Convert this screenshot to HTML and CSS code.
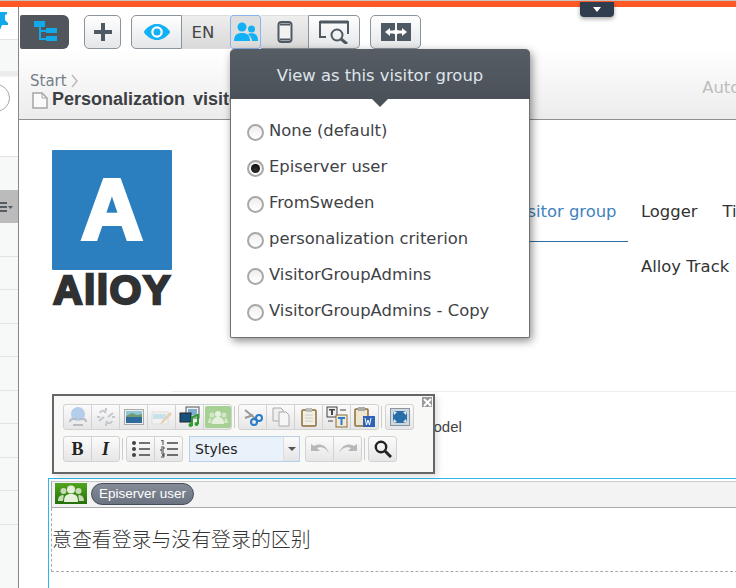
FILE: index.html
```html
<!DOCTYPE html>
<html lang="en">
<head>
<meta charset="utf-8">
<title>Personalization visitor group</title>
<link rel="stylesheet" href="styles.css">
</head>
<body>
<div class="app">
  <div class="stripe"></div>
  <div class="shell">
    <aside class="sidebar">
      <div class="side-row side-pin">
        <svg width="8" height="20" viewBox="0 0 8 20"><path d="M-6 1h13v2l-2 1v5l3 3v2H2l-2 5-1-5h-6z" fill="#12a9ea"/></svg>
      </div>
      <div class="side-row side-h30"></div>
      <div class="side-search"><span class="side-circle"></span></div>
      <div class="side-row side-h33a"></div>
      <div class="side-row side-active">
        <svg width="18" height="12" viewBox="0 0 18 12"><path d="M0 1h7v2H0zM0 5h7v2H0zM0 9h7v2H0z" fill="#555b63"/><path d="M8 5h5l-2.500 3z" fill="#555b63"/></svg>
      </div>
      <div class="side-row side-h33"></div>
      <div class="side-row side-h33"></div>
      <div class="side-row side-h33"></div>
      <div class="side-row side-h33"></div>
      <div class="side-row side-h33"></div>
      <div class="side-row side-h33"></div>
      <div class="side-row side-h33"></div>
      <div class="side-row side-h33"></div>
      <div class="side-row side-h33"></div>
    </aside>
    <main class="main">
      <div class="toolbar">
        <button class="tree-btn">
          <svg width="24" height="22" viewBox="0 0 24 22"><path d="M1 0h11v6H1zM6 6h2v13H6z" fill="#12a9ea"/><path d="M7 9h6v2H7zM7 17h6v2H7z" fill="#12a9ea"/><path d="M13 7h11v5H13zM13 15h11v5H13z" fill="#12a9ea"/></svg>
        </button>
        <button class="btn btn-add">
          <svg width="20" height="20" viewBox="0 0 20 20"><path d="M8 1h4v7h7v4h-7v7H8v-7H1V8h7z" fill="#4f5963"/></svg>
        </button>
        <div class="btn-group">
          <button class="seg seg-eye">
            <svg width="28" height="16" viewBox="0 0 30 18"><path d="M0 9C5 2 10 0 15 0s10 2 15 9c-5 7-10 9-15 9S5 16 0 9z" fill="#12b0f5"/><circle cx="15" cy="9" r="6.500" fill="#fff"/><circle cx="15" cy="9" r="4" fill="#12b0f5"/></svg>
          </button>
          <button class="seg seg-lang">EN</button>
          <button class="seg seg-people">
            <svg width="24" height="20" viewBox="0 0 24 20"><circle cx="8" cy="5" r="4.500" fill="#12b0f5"/><path d="M0 19c0-6 3-8 8-8s8 2 8 8z" fill="#12b0f5"/><circle cx="17.500" cy="7" r="3.500" fill="#12b0f5"/><path d="M14 12c1-1 6-1 7 0 2 1 3 3 3 7h-6c0-3-2-5-4-7z" fill="#12b0f5"/></svg>
          </button>
          <button class="seg seg-mobile">
            <svg width="16" height="22" viewBox="0 0 16 22"><rect x="1.500" y="1" width="13" height="20" rx="3" fill="#f2f2f2" stroke="#4f5963" stroke-width="2"/><path d="M3 3.500h10M3 18.500h10" stroke="#4f5963" stroke-width="2"/></svg>
          </button>
          <button class="seg seg-preview">
            <svg width="30" height="24" viewBox="0 0 30 24"><path d="M7 17H1V2h28v12" fill="none" stroke="#4f5963" stroke-width="2"/><path d="M1 2h28" stroke="#4f5963" stroke-width="3"/><circle cx="18" cy="15" r="5.500" fill="none" stroke="#4f5963" stroke-width="2"/><path d="M22 19l6 5" stroke="#4f5963" stroke-width="3"/></svg>
          </button>
        </div>
        <button class="btn btn-compare">
          <svg width="30" height="18" viewBox="0 0 30 18"><path d="M0 0h14v18H0zM16 0h14v18H16z" fill="#4f5963"/><path d="M11 9l5-4v2.500h-2v3h2V13zM19 9l-5-4v8z" fill="#fff"/><path d="M4 9l5-4v2.500h6v3H9V13zM26 9l-5-4v2.500h-6v3h6V13z" fill="#fff"/></svg>
        </button>
      </div>
      <header class="page-head">
        <div class="head-text">
          <div class="crumb">Start <svg class="crumb-arrow" width="8" height="14" viewBox="0 0 8 14"><path d="M1 1l5 6-5 6" fill="none" stroke="#bbb" stroke-width="1.500"/></svg></div>
          <div class="title-row">
            <svg class="page-icon" width="16" height="17" viewBox="0 0 16 17"><path d="M1 1h9l5 5v10H1z" fill="#fafafa" stroke="#a5a5a5" stroke-width="1.500"/><path d="M10 1v5h5" fill="none" stroke="#a5a5a5"/></svg>
            <h1 class="title">Personalization visitor group</h1>
          </div>
        </div>
        <div class="autosave">Autosaved</div>
      </header>
      <section class="content">
        <div class="hero">
          <div class="logo">
            <div class="logo-mark">A</div>
            <div class="logo-word">AllOY</div>
          </div>
          <nav class="nav">
            <a class="tab-active">Visitor group</a>
            <div class="nav-rest">
              <div class="nav-line"><a>Logger</a><a>Timer</a></div>
              <div class="nav-line"><a>Alloy Track</a></div>
            </div>
          </nav>
        </div>
        <div class="model-row">
          <p class="model-text">Model</p>
        </div>
        <div class="editor">
          <div class="editor-head">
            <span class="vg-icon">
              <svg width="26" height="17" viewBox="0 0 26 17"><circle cx="13" cy="4.500" r="4" fill="#e6f1dc"/><path d="M6 17c0-6 2-8 7-8s7 2 7 8z" fill="#e6f1dc"/><circle cx="5.500" cy="6" r="3" fill="#c5dcb5"/><path d="M0 16c0-4 2-6 5.500-6 .5 2-.5 4-.5 6zM26 16c0-4-2-6-5.500-6-.5 2 .5 4 .5 6z" fill="#c5dcb5"/><circle cx="20.500" cy="6" r="3" fill="#c5dcb5"/></svg>
            </span>
            <span class="vg-pill">Episerver user</span>
          </div>
          <div class="editor-body">意查看登录与没有登录的区别</div>
        </div>
      </section>
    </main>
  </div>

  <div class="pull-tab"><span class="pull-arrow"></span></div>

  <div class="popup">
    <div class="popup-head">View as this visitor group<span class="popup-caret"></span></div>
    <ul class="popup-list">
      <li><span class="radio"></span>None (default)</li>
      <li><span class="radio radio-on"></span>Episerver user</li>
      <li><span class="radio"></span>FromSweden</li>
      <li><span class="radio"></span>personalization criterion</li>
      <li><span class="radio"></span>VisitorGroupAdmins</li>
      <li><span class="radio"></span>VisitorGroupAdmins - Copy</li>
    </ul>
  </div>

  <div class="rte">
    <span class="rte-close">
      <svg width="9" height="9" viewBox="0 0 9 9"><path d="M1 1l7 7M8 1L1 8" stroke="#fff" stroke-width="2"/></svg>
    </span>
    <div class="rte-row">
      <div class="tb-group">
        <span class="tb"><svg width="22" height="22" viewBox="0 0 22 22"><circle cx="11" cy="8" r="7" fill="#b4cdea"/><path d="M3 16a3 3 0 0 1 3-3h4M19 16a3 3 0 0 0-3-3h-4M6 19h10" fill="none" stroke="#b9bdc2" stroke-width="2"/></svg></span>
        <span class="tb"><svg width="20" height="20" viewBox="0 0 20 20"><path d="M4 6a3 3 0 0 1 4-2l2 2M16 14a3 3 0 0 1-4 2l-2-2M3 14l5-4M17 6l-5 4M10 1v3M10 16v3M1 10h3M16 10h3" fill="none" stroke="#c4c7cb" stroke-width="2"/></svg></span>
        <span class="tb"><svg width="20" height="16" viewBox="0 0 20 16"><rect x=".5" y=".5" width="19" height="15" fill="#eee" stroke="#aaa"/><rect x="2" y="2" width="16" height="5" fill="#8fc6d8"/><path d="M2 7l6-3 5 2 5-1v3H2z" fill="#6e9a74"/><rect x="2" y="8" width="16" height="6" fill="#2f6b9b"/></svg></span>
        <span class="tb"><svg width="22" height="18" viewBox="0 0 22 18"><rect x="1" y="4" width="16" height="12" fill="#f2f2f2" stroke="#ddd"/><rect x="2" y="6" width="13" height="5" fill="#c6e3ec"/><path d="M10 14l9-10 2 2-9 9-3 1z" fill="#e8cfb0"/></svg></span>
        <span class="tb"><svg width="22" height="22" viewBox="0 0 22 22"><rect x="7" y="1" width="13" height="11" fill="#eef3f6" stroke="#555"/><rect x="9" y="3" width="9" height="6" fill="#7faed0"/><rect x="1" y="7" width="11" height="9" fill="#16527f" stroke="#222"/><path d="M13 20V11l6-2v9" fill="none" stroke="#2d9e31" stroke-width="2"/><circle cx="11.500" cy="19" r="2" fill="#2d9e31"/><circle cx="17.500" cy="18" r="2" fill="#2d9e31"/></svg></span>
        <span class="tb"><span class="tb-green"><svg width="20" height="14" viewBox="0 0 20 14"><circle cx="10" cy="4" r="3" fill="#e4f0dc"/><path d="M4 14c0-5 2-7 6-7s6 2 6 7z" fill="#e4f0dc"/><circle cx="4" cy="5" r="2.500" fill="#d4e6c8"/><circle cx="16" cy="5" r="2.500" fill="#d4e6c8"/><path d="M0 13c0-3 1-5 3-5l1 5zM20 13c0-3-1-5-3-5l-1 5z" fill="#d4e6c8"/></svg></span></span>
      </div>
      <span class="tb-sep"></span>
      <div class="tb-group">
        <span class="tb"><svg width="20" height="20" viewBox="0 0 20 20"><path d="M2 3l11 9M2 11l8-3" stroke="#999" stroke-width="2"/><circle cx="11" cy="15" r="3" fill="none" stroke="#2a7cc9" stroke-width="2"/><circle cx="16" cy="11" r="3" fill="none" stroke="#2a7cc9" stroke-width="2"/></svg></span>
        <span class="tb"><svg width="18" height="20" viewBox="0 0 18 20"><path d="M1 1h8l2 2v11H1z" fill="#eee" stroke="#aaa"/><path d="M7 5h7l3 3v11H7z" fill="#f6f6f6" stroke="#aaa"/></svg></span>
        <span class="tb"><svg width="16" height="20" viewBox="0 0 16 20"><rect x="1" y="3" width="14" height="16" rx="1" fill="#f3efe2" stroke="#8a6d3a" stroke-width="1.500"/><rect x="5" y="1" width="6" height="4" fill="#bbb"/><path d="M4 8h8M4 11h8M4 14h8" stroke="#ccc"/></svg></span>
        <span class="tb"><svg width="22" height="22" viewBox="0 0 22 22"><rect x="1" y="1" width="10" height="10" fill="#eee" stroke="#444"/><path d="M3 3h6v1.500H7V9H5V4.500H3z" fill="#444"/><rect x="10" y="9" width="11" height="12" fill="#f3ead6" stroke="#8a6d3a"/><path d="M12 11h7v2h-2.500v6h-2v-6H12z" fill="#2a7cc9"/><path d="M14 4h6M2 15h5" stroke="#444"/></svg></span>
        <span class="tb"><svg width="22" height="22" viewBox="0 0 22 22"><rect x="1" y="3" width="13" height="17" rx="1" fill="#efe6cf" stroke="#8a6d3a" stroke-width="1.500"/><rect x="4" y="1" width="7" height="4" fill="#aaa"/><rect x="9" y="10" width="12" height="11" fill="#2d62b5"/><path d="M11 12l1.500 7 1.500-5 1.500 5 1.500-7" fill="none" stroke="#fff"/></svg></span>
      </div>
      <span class="tb-sep"></span>
      <div class="tb-group">
        <span class="tb"><svg width="20" height="18" viewBox="0 0 20 18"><rect x=".5" y=".5" width="19" height="17" fill="#cfd8df" stroke="#8a97a3"/><rect x="3" y="3" width="14" height="12" fill="#2a6ea8"/><path d="M3 3l4 1-3 3zM17 3l-4 1 3 3zM3 15l4-1-3-3zM17 15l-4-1 3-3z" fill="#e8eef3"/></svg></span>
      </div>
    </div>
    <div class="rte-row">
      <div class="tb-group">
        <span class="tb tb-bold">B</span>
        <span class="tb tb-italic">I</span>
      </div>
      <span class="tb-sep"></span>
      <div class="tb-group">
        <span class="tb"><svg width="18" height="16" viewBox="0 0 18 16"><circle cx="2" cy="2" r="2" fill="#444"/><circle cx="2" cy="8" r="2" fill="#444"/><circle cx="2" cy="14" r="2" fill="#444"/><path d="M7 2h11M7 8h11M7 14h11" stroke="#444" stroke-width="1.500"/></svg></span>
        <span class="tb"><svg width="18" height="18" viewBox="0 0 18 18"><path d="M1 1l2-1v5M1 7h3v2H1v2h3M1 13h3v2H2h2v2H1" fill="none" stroke="#444"/><path d="M7 3h11M7 9h11M7 15h11" stroke="#444" stroke-width="1.500"/></svg></span>
      </div>
      <div class="rte-select">
        <span class="rte-select-label">Styles</span>
        <span class="rte-select-arrow"></span>
      </div>
      <div class="tb-group">
        <span class="tb"><svg width="20" height="12" viewBox="0 0 20 12"><path d="M19 11C17 6 12 3 7 5l3 3H1V1l3 2C11-1 17 3 19 11z" fill="#b7b7b7"/></svg></span>
        <span class="tb"><svg width="20" height="12" viewBox="0 0 20 12"><path d="M1 11C3 6 8 3 13 5l-3 3h9V1l-3 2C9-1 3 3 1 11z" fill="#b7b7b7"/></svg></span>
      </div>
      <span class="tb-sep"></span>
      <div class="tb-group">
        <span class="tb"><svg width="18" height="18" viewBox="0 0 18 18"><circle cx="7" cy="7" r="5.200" fill="none" stroke="#222" stroke-width="2.400"/><path d="M11 11l6 6" stroke="#222" stroke-width="3"/></svg></span>
      </div>
    </div>
  </div>
</div>
</body>
</html>
```

FILE: styles.css
```css
* { box-sizing: border-box; }
html, body { margin: 0; padding: 0; }
body { width: 736px; height: 588px; overflow: hidden; background: #fff; font-family: "DejaVu Sans", sans-serif; color: #333; }
.app { position: relative; width: 736px; height: 588px; overflow: hidden; display: flex; flex-direction: column; }
.stripe { height: 7px; flex: none; background: #ff5a26; border-top: 1px solid #c9c4c0; }
.shell { flex: 1; display: flex; min-height: 0; }

.sidebar { width: 19px; flex: none; background: #f7f9f9; border-right: 1px solid #888; display: flex; flex-direction: column; overflow: hidden; }
.side-row { flex: none; border-bottom: 1px solid #e2e4e4; display: flex; align-items: center; }
.side-pin { height: 33px; background: #fff; padding-bottom: 4px; }
.side-h30 { height: 31px; border-bottom: 0; }
.side-search { flex: none; height: 86px; background: linear-gradient(#ececec 0, #ececec 5px, #fff 6px); padding: 13px 0 0; border-bottom: 1px solid #e2e4e4; position: relative; }
.side-circle { display: block; width: 28px; height: 28px; margin-left: -18px; border: 1px solid #aaa; border-radius: 50%; background: #fff; }
.side-h33a { height: 33px; border-bottom: 0; }
.side-h33 { height: 33.500px; }
.side-active { height: 33px; background: #bbb; border-bottom: 0; justify-content: flex-start; }

.main { flex: 1; min-width: 0; display: flex; flex-direction: column; }
.toolbar { height: 42px; flex: none; display: flex; align-items: flex-end; padding-left: 1px; background: #fff; }
.toolbar button { font: inherit; padding: 0; margin: 0; display: flex; align-items: center; justify-content: center; cursor: pointer; }
.tree-btn { width: 49px; height: 34px; background: #50565c; border: 0; border-radius: 2px 6px 6px 2px; }
.btn { height: 34px; border: 1px solid #8b949c; border-radius: 5px; background: linear-gradient(#fff, #e4e6e8); }
.btn-add { width: 37px; margin-left: 15px !important; }
.btn-group { display: flex; height: 34px; margin-left: 10px; }
.seg { height: 34px; border: 1px solid #8b949c; border-left: 0; background: linear-gradient(#fff, #e4e6e8); }
.seg-eye { width: 51px; border-left: 1px solid #8b949c; border-radius: 5px 0 0 5px; }
.seg-lang { width: 48px; padding-right: 6px !important; border-top-color: #ddd; border-bottom-color: #ddd; border-right: 0; background: linear-gradient(#eee, #d9d9d9); font-size: 16.500px !important; color: #444; }
.seg-people { width: 31px; border: 1px solid #8ab4ec; border-radius: 3px; background: #dedede; }
.seg-mobile { width: 48px; background: linear-gradient(#eee, #d9d9d9); border-right: 1px solid #8b949c; border-top-color: #ddd; }
.seg-preview { width: 51px; border-radius: 0 5px 5px 0; }
.btn-compare { width: 51px; margin-left: 10px !important; }

.page-head { height: 71px; flex: none; display: flex; justify-content: space-between; align-items: flex-end; background: linear-gradient(#fff, #ececec); border-bottom: 1px solid #8f8f8f; padding: 0 0 10px 11px; }
.crumb { font-size: 15px; line-height: 18px; color: #777f87; display: flex; align-items: center; gap: 4px; position: relative; top: 2px; }
.crumb-arrow { flex: none; }
.title-row { display: flex; align-items: center; gap: 4px; padding-left: 2px; margin-top: 1px; }
.page-icon { flex: none; margin-top: 2px; }
.title { margin: 0; font: bold 18px/20px "Liberation Sans", sans-serif; word-spacing: 3px; color: #3c4043; white-space: nowrap; }
.autosave { font-size: 16.400px; line-height: 20px; color: #bdbdbd; white-space: nowrap; margin-bottom: 11px; margin-right: -53px; }

.content { flex: 1; min-height: 0; padding: 30px 0 0 33px; background: #fff; }
.hero { display: flex; height: 240px; }
.logo { width: 120px; flex: none; }
.logo-mark { width: 120px; height: 120px; border-radius: 1px; background: #2b7fbe; color: #fff; font: bold 85px/120px "Liberation Sans", sans-serif; text-align: center; -webkit-text-stroke: 4px #fff; }
.logo-word { margin-top: 1px; font: bold 41px/38px "Liberation Sans", sans-serif; color: #303133; letter-spacing: 1.400px; -webkit-text-stroke: 2.400px #303133; white-space: nowrap; padding-left: 1px; }
.nav { display: flex; margin-left: 331px; font-size: 16.400px; line-height: 20px; white-space: nowrap; color: #333; }
.tab-active { flex: none; width: 125px; height: 92px; padding: 52px 0 0 9px; border-bottom: 1px solid #2b6ea3; color: #3f82c0; }
.nav-rest { display: flex; flex-direction: column; gap: 35px; padding: 52px 0 0 13px; }
.nav-line { display: flex; gap: 25px; }
.model-row { height: 87px; margin-top: 1px; border-top: 1px solid #eee; margin-left: 120px; }
.model-text { margin: 0; padding: 26px 0 0 249px; font: 15px/18px "Liberation Sans", sans-serif; color: #444; }
.editor { margin: 0 0 0 -4px; width: 700px; height: 110px; border: 1px solid #2bb6ee; border-right: 0; border-bottom: 0; padding: 2px 0 0 2px; }
.editor-head { height: 27px; background: #f3f3f3; border: 1px solid #ccc; border-bottom-color: #aaa; border-right: 0; border-left-color: #aaa; display: flex; align-items: center; gap: 4px; padding: 0 0 2px 3px; }
.vg-icon { width: 32px; height: 21px; display: flex; align-items: center; justify-content: center; background: linear-gradient(#52a51f, #26700c); }
.vg-pill { width: 103px; height: 22px; border-radius: 11px; border: 1px solid #464e5c; background: linear-gradient(#858c98, #6b7280); color: #fff; font: 13.500px/20px "Liberation Sans", sans-serif; text-align: center; white-space: nowrap; }
.editor-body { height: 64px; border: 1px dashed #aaa; border-top: 0; border-right: 0; padding: 18px 0 0; font: 300 19.900px/26px "Noto Sans CJK SC", sans-serif; color: #333; white-space: nowrap; overflow: hidden; }

.pull-tab { position: absolute; left: 580px; top: 2px; width: 34px; height: 15px; background: #2f3d4e; border-radius: 0 0 4px 4px; box-shadow: 0 2px 4px rgba(0,0,0,.35); display: flex; justify-content: center; padding-top: 5px; }
.pull-arrow { width: 0; height: 0; border: 4px solid transparent; border-top: 5px solid #fff; border-left-width: 4.500px; border-right-width: 4.500px; }

.popup { position: absolute; left: 230px; top: 49px; width: 300px; height: 289px; background: #fff; border: 1px solid #707070; border-top: 0; border-radius: 5px 5px 2px 2px; box-shadow: 2px 3px 8px rgba(0,0,0,.45); }
.popup-head { position: relative; height: 50px; margin: 0 -1px; background: linear-gradient(#565d64, #4b5158); border-radius: 5px 5px 0 0; color: #dfe5ea; font-size: 16.400px; line-height: 53px; text-align: center; }
.popup-caret { position: absolute; left: 142px; top: 50px; width: 0; height: 0; border: 8px solid transparent; border-top-color: #4b5158; border-bottom: 0; }
.popup-list { list-style: none; margin: 0; padding: 14px 0 0 16px; font-size: 16.400px; color: #3f4347; }
.popup-list li { height: 36px; line-height: 36px; display: flex; align-items: center; gap: 5px; white-space: nowrap; }
.radio { flex: none; width: 17px; height: 17px; margin-top: 2px; border: 2px solid #a8a8a8; border-radius: 50%; background: linear-gradient(#eee, #fff); position: relative; }
.radio-on::after { content: ""; position: absolute; left: 2px; top: 2px; width: 9px; height: 9px; border-radius: 50%; background: radial-gradient(circle at 50% 65%, #333, #000); }

.rte { position: absolute; left: 52px; top: 394px; width: 383px; height: 80px; background: #f8f8f7; border: 2px solid #666; padding: 8px 0 0 9px; box-shadow: 3px 3px 6px rgba(0,0,0,.12); display: flex; flex-direction: column; gap: 6px; }
.rte-close { position: absolute; right: 1px; top: 1px; width: 10px; height: 10px; background: #999; display: flex; align-items: center; justify-content: center; }
.rte-row { display: flex; align-items: stretch; height: 26px; }
.tb-group { display: flex; height: 26px; border: 1px solid #d2d2d2; border-radius: 3px; background: linear-gradient(#fbfbfb, #e6e6e6); flex: none; }
.tb { width: 28px; height: 24px; display: flex; align-items: center; justify-content: center; border-right: 1px solid #d2d2d2; flex: none; }
.tb:last-child { width: 27px; border-right: 0; }
.tb-green { width: 26px; height: 22px; background: #a6d094; border-radius: 2px; display: flex; align-items: center; justify-content: center; }
.tb-sep { width: 6px; flex: none; position: relative; }
.tb-sep::after { content: ""; position: absolute; left: 2px; top: 2px; width: 1px; height: 22px; background: #ccc; }
.tb-bold { font: bold 18px/24px "Liberation Serif", serif; color: #222; }
.tb-italic { font: italic bold 18px/24px "Liberation Serif", serif; color: #222; }
.rte-select { width: 111px; height: 26px; flex: none; margin: 0 5px 0 6px; border: 1px solid #b9cfe8; display: flex; background: #e9f1fb; font: 14px/24px "DejaVu Sans", sans-serif; color: #222; }
.rte-select-label { flex: 1; padding-left: 5px; }
.rte-select-arrow { width: 16px; flex: none; background: linear-gradient(#fbfbfb, #e4e4e4); border-left: 1px solid #ddd; position: relative; }
.rte-select-arrow::after { content: ""; position: absolute; left: 4px; top: 10px; border: 4px solid transparent; border-top: 4px solid #555; border-bottom: 0; }
```
